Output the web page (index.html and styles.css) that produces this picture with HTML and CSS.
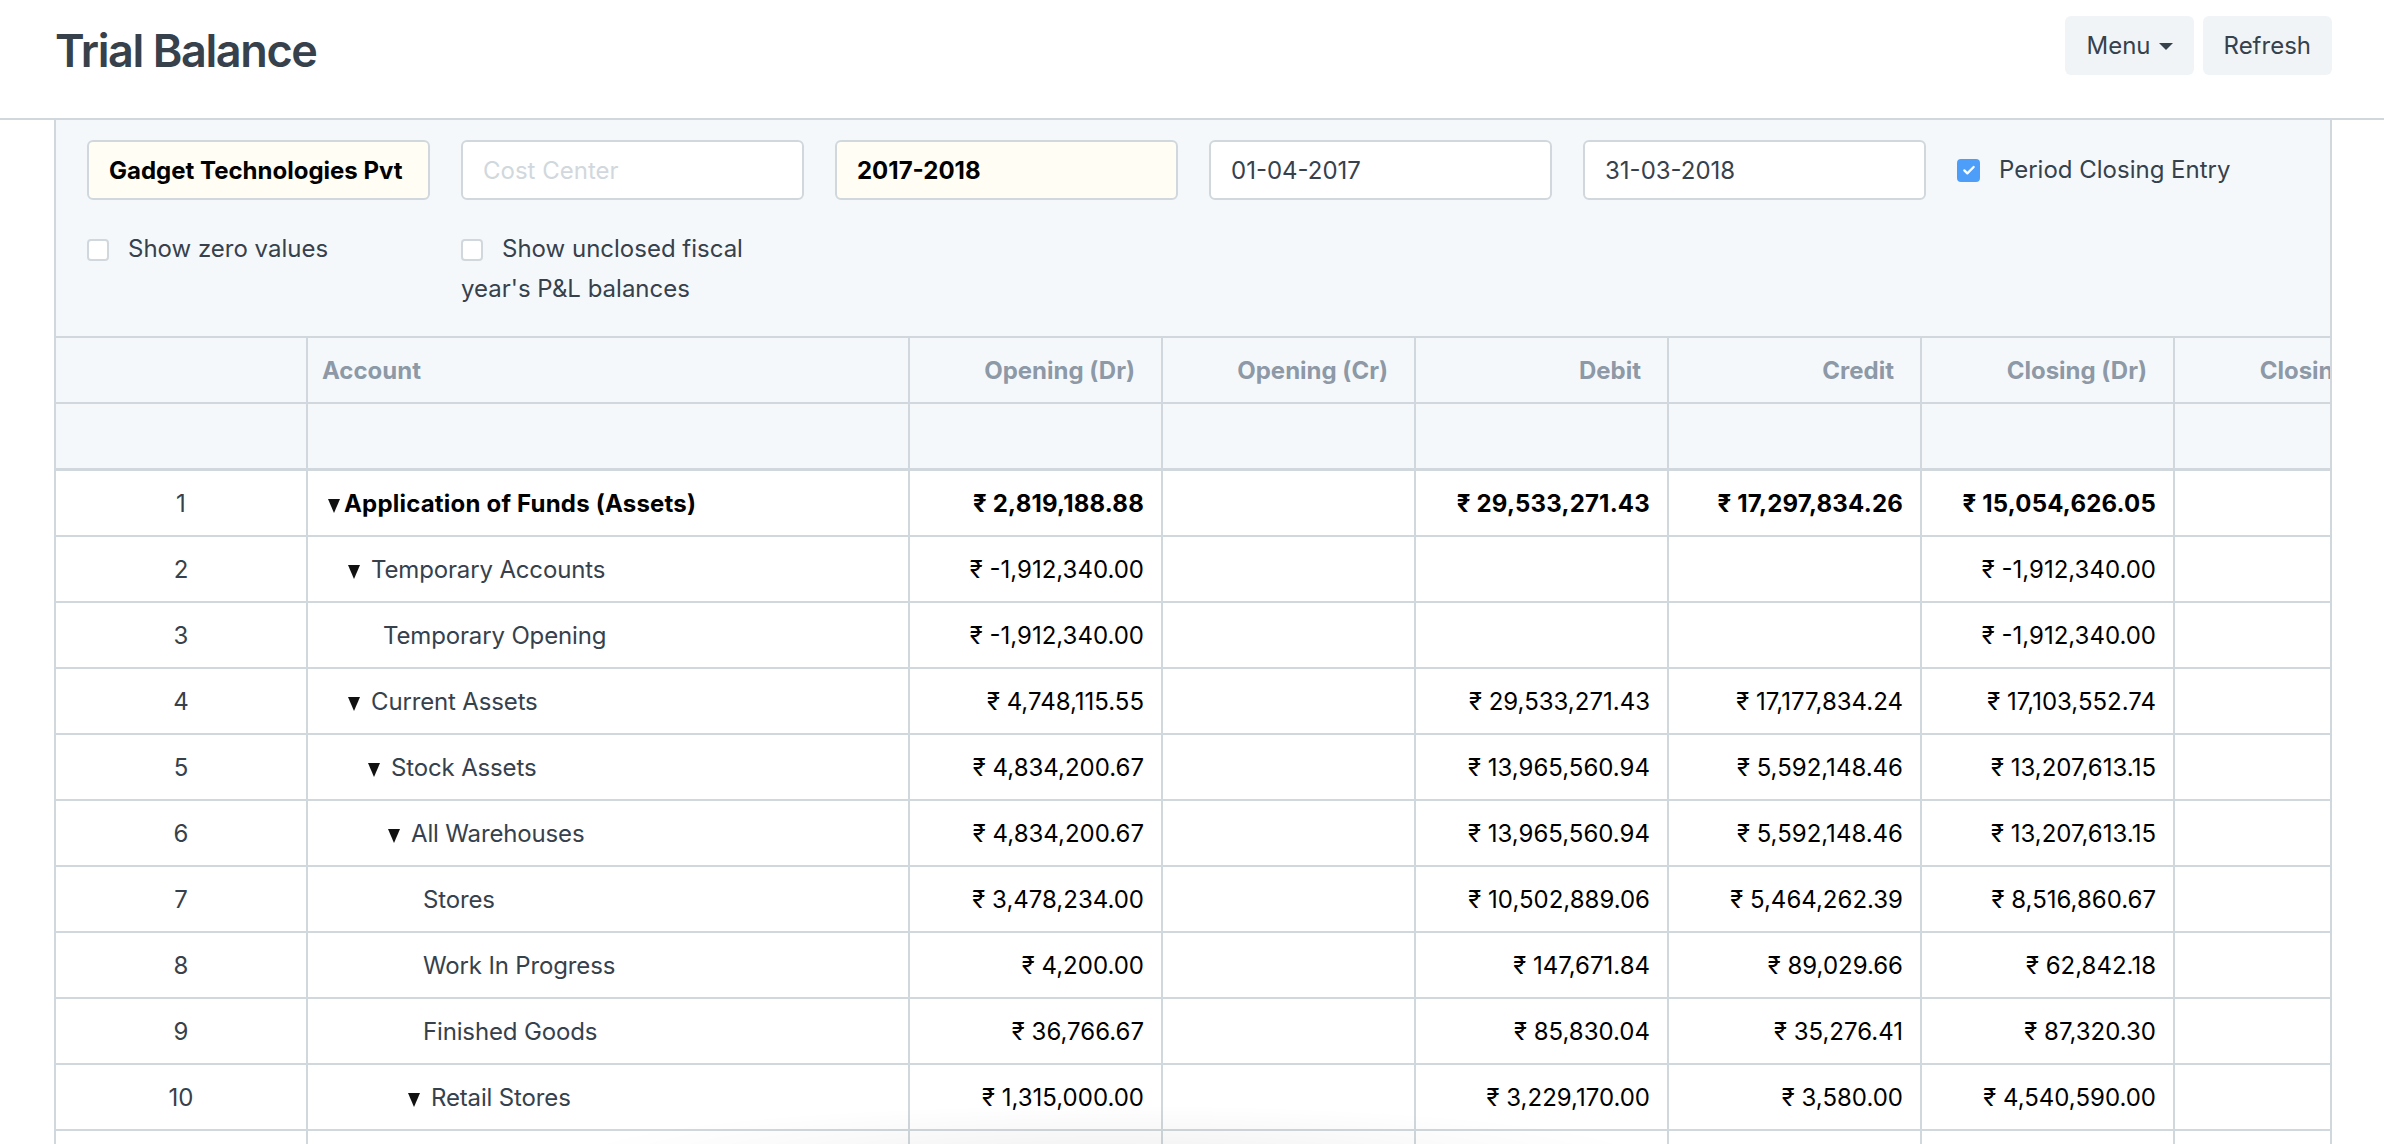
FILE: index.html
```html
<!DOCTYPE html>
<html lang="en">
<head>
<meta charset="utf-8">
<title>Trial Balance</title>
<link rel="stylesheet" href="styles.css">
</head>
<body>
<header class="page-head">
  <h1 class="title">Trial Balance</h1>
  <div class="actions">
    <button class="btn">Menu <span class="caret"></span></button>
    <button class="btn">Refresh</button>
  </div>
</header>
<main class="report">
  <section class="filters">
    <div class="filter-grid">
      <div class="input linked">Gadget Technologies Pvt</div>
      <div class="input placeholder">Cost Center</div>
      <div class="input linked">2017-2018</div>
      <div class="input">01-04-2017</div>
      <div class="input">31-03-2018</div>
      <div class="check inline"><span class="cb on"><svg viewBox="0 0 24 24" width="16" height="16"><path d="M5 12.5l4.5 4.5L19 7.5" fill="none" stroke="#fff" stroke-width="3.4" stroke-linecap="round" stroke-linejoin="round"/></svg></span><span class="lbl">Period Closing Entry</span></div>
    </div>
    <div class="filter-grid second">
      <div class="check"><span class="cb"></span>Show zero values</div>
      <div class="check"><span class="cb"></span>Show unclosed fiscal year's P&amp;L balances</div>
    </div>
  </section>
  <div class="table-wrap">
    <table class="dt">
      <colgroup>
        <col class="c-idx"><col class="c-acc"><col class="c-num"><col class="c-num"><col class="c-num"><col class="c-num"><col class="c-num"><col class="c-num">
      </colgroup>
      <thead>
        <tr class="head">
          <th></th>
          <th class="left">Account</th>
          <th>Opening (Dr)</th>
          <th>Opening (Cr)</th>
          <th>Debit</th>
          <th>Credit</th>
          <th>Closing (Dr)</th>
          <th>Closing (Cr)</th>
        </tr>
        <tr class="filter-row">
          <th></th><th></th><th></th><th></th><th></th><th></th><th></th><th></th>
        </tr>
      </thead>
      <tbody>
        <tr class="bold">
          <td class="idx">1</td>
          <td class="acc lv0"><span class="tog"></span>Application of Funds (Assets)</td>
          <td>₹ 2,819,188.88</td><td></td><td>₹ 29,533,271.43</td><td>₹ 17,297,834.26</td><td>₹ 15,054,626.05</td><td></td>
        </tr>
        <tr>
          <td class="idx">2</td>
          <td class="acc lv1"><span class="tog sp"></span>Temporary Accounts</td>
          <td>₹ -1,912,340.00</td><td></td><td></td><td></td><td>₹ -1,912,340.00</td><td></td>
        </tr>
        <tr>
          <td class="idx">3</td>
          <td class="acc lv2 leaf">Temporary Opening</td>
          <td>₹ -1,912,340.00</td><td></td><td></td><td></td><td>₹ -1,912,340.00</td><td></td>
        </tr>
        <tr>
          <td class="idx">4</td>
          <td class="acc lv1"><span class="tog sp"></span>Current Assets</td>
          <td>₹ 4,748,115.55</td><td></td><td>₹ 29,533,271.43</td><td>₹ 17,177,834.24</td><td>₹ 17,103,552.74</td><td></td>
        </tr>
        <tr>
          <td class="idx">5</td>
          <td class="acc lv2"><span class="tog sp"></span>Stock Assets</td>
          <td>₹ 4,834,200.67</td><td></td><td>₹ 13,965,560.94</td><td>₹ 5,592,148.46</td><td>₹ 13,207,613.15</td><td></td>
        </tr>
        <tr>
          <td class="idx">6</td>
          <td class="acc lv3"><span class="tog sp"></span>All Warehouses</td>
          <td>₹ 4,834,200.67</td><td></td><td>₹ 13,965,560.94</td><td>₹ 5,592,148.46</td><td>₹ 13,207,613.15</td><td></td>
        </tr>
        <tr>
          <td class="idx">7</td>
          <td class="acc lv4 leaf">Stores</td>
          <td>₹ 3,478,234.00</td><td></td><td>₹ 10,502,889.06</td><td>₹ 5,464,262.39</td><td>₹ 8,516,860.67</td><td></td>
        </tr>
        <tr>
          <td class="idx">8</td>
          <td class="acc lv4 leaf">Work In Progress</td>
          <td>₹ 4,200.00</td><td></td><td>₹ 147,671.84</td><td>₹ 89,029.66</td><td>₹ 62,842.18</td><td></td>
        </tr>
        <tr>
          <td class="idx">9</td>
          <td class="acc lv4 leaf">Finished Goods</td>
          <td>₹ 36,766.67</td><td></td><td>₹ 85,830.04</td><td>₹ 35,276.41</td><td>₹ 87,320.30</td><td></td>
        </tr>
        <tr>
          <td class="idx">10</td>
          <td class="acc lv4"><span class="tog sp"></span>Retail Stores</td>
          <td>₹ 1,315,000.00</td><td></td><td>₹ 3,229,170.00</td><td>₹ 3,580.00</td><td>₹ 4,540,590.00</td><td></td>
        </tr>
        <tr>
          <td class="idx"></td><td class="acc"></td><td></td><td></td><td></td><td></td><td></td><td></td>
        </tr>
      </tbody>
    </table>
  </div>
</main>
<div class="toast-shadow"></div>
</body>
</html>
```

FILE: styles.css
```css
html, body {
  margin: 0;
  padding: 0;
  background: #ffffff;
}

body {
  font-family: Inter, "Noto Sans", "DejaVu Sans", sans-serif;
  color: #36414c;
  overflow: hidden;
  height: 1144px;
}

.page-head {
  display: flex;
  justify-content: space-between;
  align-items: flex-start;
  height: 118px;
  border-bottom: 2px solid #d1d8dd;
  padding: 0 52px 0 55px;
}

.title {
  margin: 21px 0 0 0;
  font-size: 45px;
  line-height: 60px;
  font-weight: 600;
  color: #36414c;
  letter-spacing: -1.4px;
}

.actions {
  display: flex;
  gap: 9px;
  margin-top: 16px;
}

.btn {
  height: 59px;
  border: none;
  border-radius: 6px;
  background: #f0f4f7;
  color: #36414c;
  font-family: inherit;
  font-size: 24px;
  padding: 0 21px;
  display: flex;
  align-items: center;
  gap: 8px;
}

.caret {
  width: 0;
  height: 0;
  border-left: 7px solid transparent;
  border-right: 7px solid transparent;
  border-top: 7px solid #36414c;
  margin-top: 2px;
}

.report {
  margin: 0 52px 0 54px;
  border-left: 2px solid #d1d8dd;
  border-right: 2px solid #d1d8dd;
  min-height: 1100px;
}

.filters {
  background: #f5f8fb;
  padding: 20px 0 27px 31px;
}

.filter-grid {
  display: grid;
  grid-template-columns: repeat(6, 343px);
  column-gap: 31px;
  align-items: center;
}

.filter-grid.second {
  margin-top: 29px;
  align-items: start;
}

.input {
  height: 56px;
  border: 2px solid #d1d8dd;
  border-radius: 6px;
  background: #ffffff;
  display: flex;
  align-items: center;
  padding: 0 20px;
  font-size: 24px;
  color: #36414c;
  white-space: nowrap;
  overflow: hidden;
}

.input.linked {
  background: #fffdf4;
  font-weight: 700;
  color: #000000;
}

.input.placeholder {
  color: #d1d8dd;
}

.check {
  font-size: 24px;
  line-height: 40px;
  color: #36414c;
}

.check.inline {
  display: flex;
  align-items: center;
  gap: 0;
}

.cb {
  display: inline-block;
  width: 22px;
  height: 22px;
  box-sizing: border-box;
  border: 2px solid #d1d8dd;
  border-radius: 4px;
  background: #ffffff;
  vertical-align: -4px;
  margin-right: 19px;
}

.cb.on {
  background: #4d9ef8;
  border-color: #4d9ef8;
  width: 23px;
  height: 23px;
  display: inline-flex;
  align-items: center;
  justify-content: center;
  margin-right: 19px;
}

.table-wrap {
  overflow: hidden;
}

.dt {
  table-layout: fixed;
  border-collapse: separate;
  border-spacing: 0;
  width: 2372px;
  border-top: 2px solid #d1d8dd;
  font-size: 24px;
}

.c-idx { width: 252px; }
.c-acc { width: 602px; }
.c-num { width: 253px; }

.dt th, .dt td {
  box-sizing: border-box;
  border-right: 2px solid #d1d8dd;
  border-bottom: 2px solid #d1d8dd;
  height: 66px;
  padding: 0 17px 0 14px;
  text-align: right;
  white-space: nowrap;
  overflow: hidden;
  vertical-align: middle;
}

.dt thead th {
  background: #f5f8fb;
  color: #8d99a6;
  font-weight: 700;
  padding-right: 26px;
}

.dt thead th.left {
  text-align: left;
}

.dt thead tr.filter-row th {
  border-bottom-width: 3px;
  height: 67px;
}

.dt td {
  color: #000000;
  background: #ffffff;
}

.dt td.idx {
  text-align: center;
  padding: 0;
  color: #36414c;
}

.dt td.acc {
  text-align: left;
  color: #36414c;
  letter-spacing: -0.15px;
}

.dt tr.bold td {
  font-weight: 700;
  color: #000000;
  letter-spacing: 0.2px;
}

.dt tr.bold td.idx {
  font-weight: 400;
  color: #36414c;
}

.lv0 { padding-left: 20px !important; }
.lv1 { padding-left: 40px !important; }
.lv2 { padding-left: 60px !important; }
.lv3 { padding-left: 80px !important; }
.lv4 { padding-left: 100px !important; }
.lv2.leaf { padding-left: 75px !important; }
.lv4.leaf { padding-left: 115px !important; }

.tog {
  display: inline-block;
  width: 0;
  height: 0;
  border-left: 6px solid transparent;
  border-right: 6px solid transparent;
  border-top: 14px solid #111111;
  margin-right: 4px;
  vertical-align: -1px;
}

.tog.sp {
  margin-right: 11px;
}

.toast-shadow {
  position: fixed;
  left: 560px;
  bottom: -70px;
  width: 1100px;
  height: 110px;
  background: radial-gradient(ellipse at center, rgba(0, 0, 0, 0.06) 0%, rgba(0, 0, 0, 0.02) 45%, rgba(0, 0, 0, 0) 70%);
  pointer-events: none;
}
```
